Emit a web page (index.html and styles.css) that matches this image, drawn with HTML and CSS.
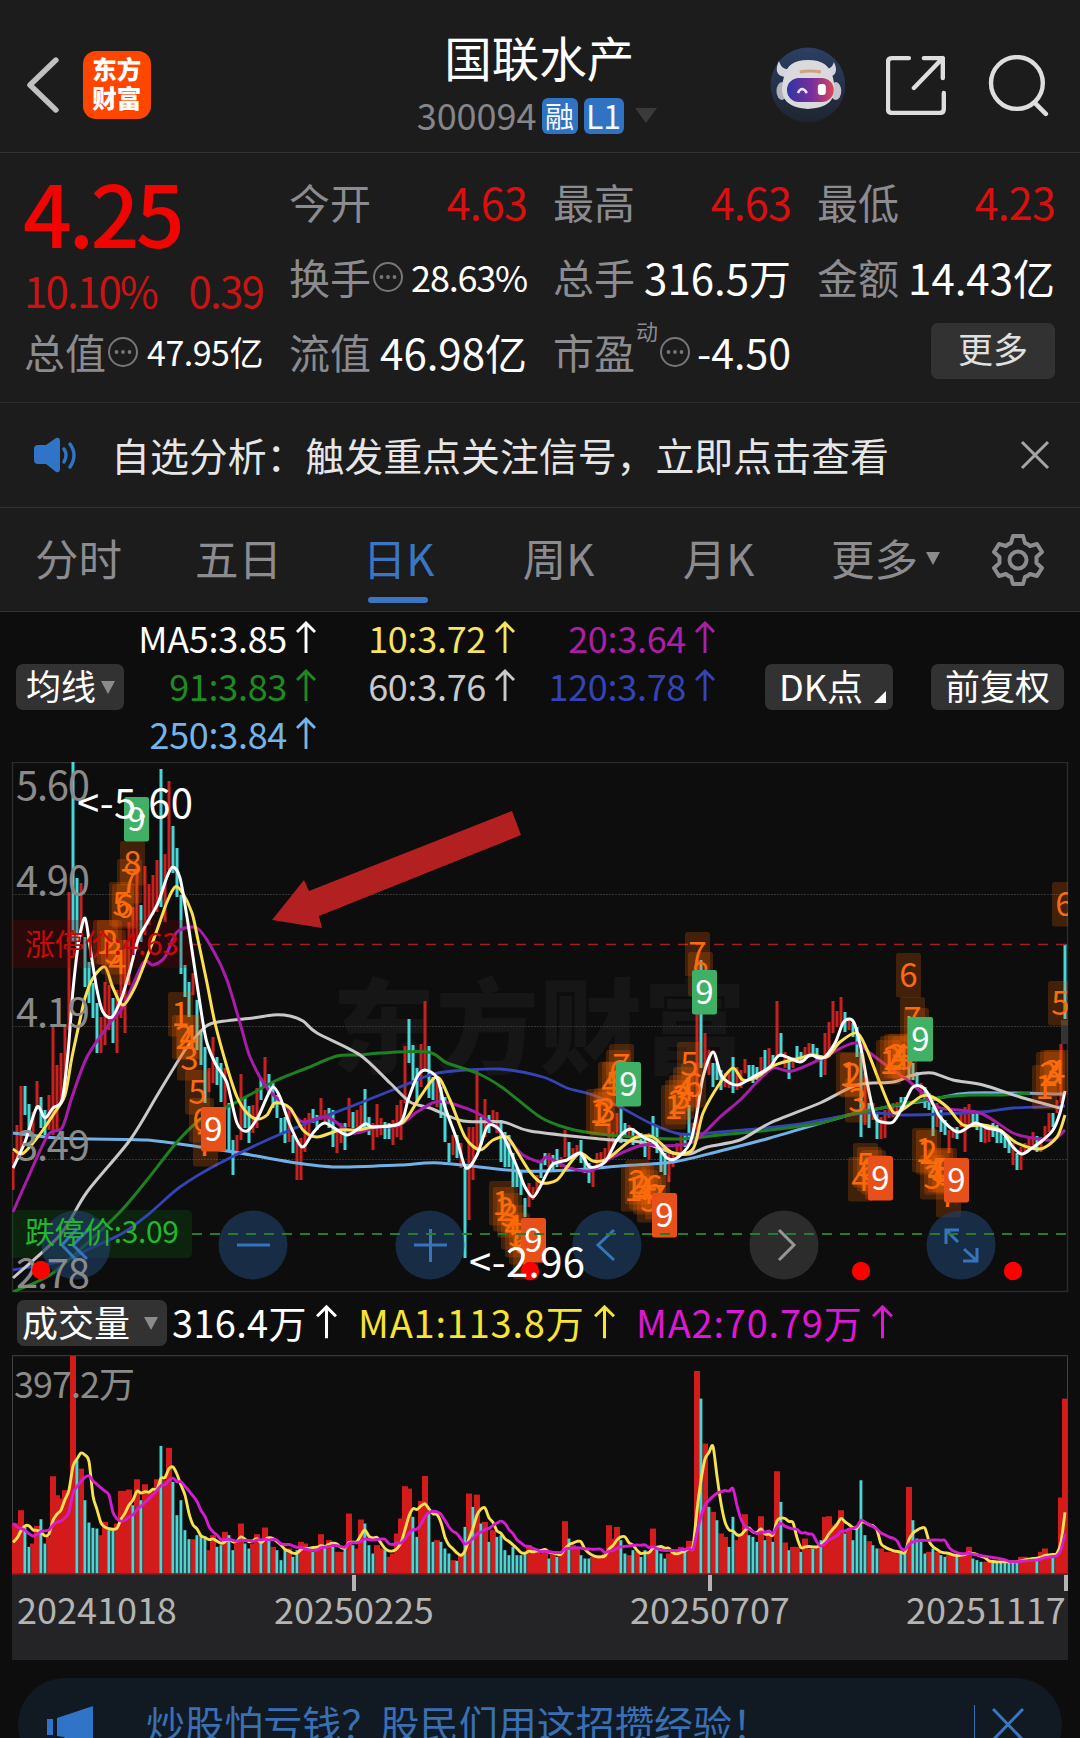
FILE: index.html
```html
<!DOCTYPE html>
<html lang="zh-CN">
<head>
    <meta charset="UTF-8">
    <meta name="viewport" content="width=device-width, initial-scale=1.0">
    <title>国联水产 300094</title>
    <link rel="stylesheet" href="styles.css">
</head>
<body>
    <svg class="defs" width="0" height="0">
        <symbol id="up" viewBox="0 0 20 32"><path d="M10 32V2M1 11L10 2L19 11" fill="none" stroke="currentColor" stroke-width="2.9"/></symbol>
        <symbol id="dots" viewBox="0 0 32 32"><circle cx="16" cy="16" r="14" fill="none" stroke="#77777a" stroke-width="2"/><circle cx="9.5" cy="16" r="1.9" fill="#77777a"/><circle cx="16" cy="16" r="1.9" fill="#77777a"/><circle cx="22.5" cy="16" r="1.9" fill="#77777a"/></symbol>
    </svg>

    <header class="header">
        <svg class="back" viewBox="0 0 34 58"><path d="M30 4L4 29L30 54" fill="none" stroke="#c0c0c0" stroke-width="5.5" stroke-linecap="round" stroke-linejoin="round"/></svg>
        <div class="logo"><span>东方</span><span>财富</span></div>
        <div class="title">
            <h1>国联水产</h1>
            <div class="code"><span>300094</span><i class="tag">融</i><i class="tag tag-wide">L1</i><b class="caret"></b></div>
        </div>
        <svg class="robot" viewBox="0 0 76 76">
            <defs>
                <linearGradient id="sky" x1="0" y1="0" x2="0" y2="1"><stop offset="0" stop-color="#2c3f63"/><stop offset="1" stop-color="#1f2430"/></linearGradient>
                <linearGradient id="visor"><stop offset="0" stop-color="#2f35a5"/><stop offset=".55" stop-color="#7b2f9c"/><stop offset="1" stop-color="#d8475c"/></linearGradient>
            </defs>
            <circle cx="38" cy="38" r="37.5" fill="url(#sky)"/>
            <path d="M9 14C5 22 6 29 15 30L20 22C14 23 11 20 9 14ZM64 15C68 22 67 30 58 30L54 22C59 23 63 20 64 15Z" fill="#d5d5dc"/>
            <ellipse cx="12" cy="44" rx="5.500" ry="9" fill="#b0b0bb"/>
            <ellipse cx="66" cy="44" rx="5.500" ry="9" fill="#c4c4cd"/>
            <path d="M38 13C53 13 60 19 63 30C68 50 62 61 38 62C16 61 8 50 14 30C17 18 24 13 38 13Z" fill="#d9d9de"/>
            <rect x="17" y="31" width="47" height="24" rx="12" fill="url(#visor)"/>
            <path d="M30 25Q40 23 51 25" stroke="#d0a376" stroke-width="3" fill="none"/>
            <path d="M28 46Q32 38 37 46" stroke="#e9e4ff" stroke-width="2.6" fill="none"/>
            <rect x="48" y="37" width="8" height="11" rx="3" fill="#fff"/>
        </svg>
        <svg class="share" viewBox="0 0 60 60"><path d="M23 3H6Q2 3 2 7V54Q2 58 6 58H54Q58 58 58 54V38M38 3H57V23M57 3L28 33" fill="none" stroke="#dedede" stroke-width="4.4" stroke-linecap="round" stroke-linejoin="round"/></svg>
        <svg class="search" viewBox="0 0 62 62"><circle cx="29" cy="28" r="26" fill="none" stroke="#dedede" stroke-width="4.4"/><path d="M47 48L58 59" stroke="#dedede" stroke-width="4.6" stroke-linecap="round"/></svg>
    </header>

    <section class="quote">
        <div class="now">
            <div class="price">4.25</div>
            <div class="change"><span>10.10%</span><span>0.39</span></div>
        </div>
        <div class="stat"><label>今开</label><em class="red">4.63</em></div>
        <div class="stat"><label>最高</label><em class="red">4.63</em></div>
        <div class="stat"><label>最低</label><em class="red">4.23</em></div>
        <div class="stat"><label>换手</label><svg class="info"><use href="#dots"/></svg><em class="mid">28.63%</em></div>
        <div class="stat"><label>总手</label><em>316.5万</em></div>
        <div class="stat"><label>金额</label><em>14.43亿</em></div>
        <div class="stat"><label>总值</label><svg class="info"><use href="#dots"/></svg><em class="small">47.95亿</em></div>
        <div class="stat"><label>流值</label><em>46.98亿</em></div>
        <div class="stat"><label>市盈<sup>动</sup></label><svg class="info"><use href="#dots"/></svg><em class="pe">-4.50</em></div>
        <div class="stat"><button class="more">更多</button></div>
    </section>

    <section class="notice">
        <svg class="speaker" viewBox="0 0 46 36"><path d="M5 8H13L23 1Q27 0 27 4V32Q27 36 23 35L13 27H5Q1 27 1 23V12Q1 8 5 8Z" fill="#2f74c6"/><path d="M31 12Q35 18 31 25M37 7Q45 18 37 30" fill="none" stroke="#2f74c6" stroke-width="3.4" stroke-linecap="round"/></svg>
        <p>自选分析：触发重点关注信号，立即点击查看</p>
        <svg class="close" viewBox="0 0 30 30"><path d="M2 2L28 28M28 2L2 28" stroke="#a5a5a5" stroke-width="3"/></svg>
    </section>

    <nav class="tabs">
        <a>分时</a><a>五日</a><a class="active">日K</a><a>周K</a><a>月K</a><a>更多<b class="caret"></b></a>
        <svg class="gear" viewBox="-27 -27 54 54"><path fill="none" stroke="#8b8b90" stroke-width="4" stroke-linejoin="round" d="M-5 -24H5L7 -17Q10 -16 12 -14L19 -16L24 -8L18.500 -3V3L24 8L19 16L12 14Q10 16 7 17L5 24H-5L-7 17Q-10 16 -12 14L-19 16L-24 8L-18.500 3V-3L-24 -8L-19 -16L-12 -14Q-10 -16 -7 -17Z"/><circle r="8.500" fill="none" stroke="#8b8b90" stroke-width="4"/></svg>
    </nav>

    <main>
        <div class="legend">
            <button class="chip chip-ma">均线<b class="caret"></b></button>
            <div class="ma-grid">
                <span class="c-white">MA5:3.85<svg><use href="#up"/></svg></span>
                <span class="c-yellow">10:3.72<svg><use href="#up"/></svg></span>
                <span class="c-purple">20:3.64<svg><use href="#up"/></svg></span>
                <span class="c-green">91:3.83<svg><use href="#up"/></svg></span>
                <span class="c-gray">60:3.76<svg><use href="#up"/></svg></span>
                <span class="c-blue">120:3.78<svg><use href="#up"/></svg></span>
                <span class="c-sky">250:3.84<svg><use href="#up"/></svg></span>
            </div>
            <button class="chip chip-dk">DK点<b class="corner"></b></button>
            <button class="chip chip-fq">前复权</button>
        </div>

        <svg id="kline" class="kline" viewBox="0 762 1080 532"></svg>

        <div class="vol-legend">
            <button class="chip chip-vol">成交量<b class="caret"></b></button>
            <span class="v1">316.4万<svg><use href="#up"/></svg></span>
            <span class="v2">MA1:113.8万<svg><use href="#up"/></svg></span>
            <span class="v3">MA2:70.79万<svg><use href="#up"/></svg></span>
        </div>

        <svg id="volume" class="volume" viewBox="0 1355 1080 220"></svg>

        <div class="dates">
            <span>20241018</span><span>20250225</span><span>20250707</span><span>20251117</span>
            <i class="tick t1"></i><i class="tick t2"></i><i class="tick t3"></i>
        </div>
    </main>

    <footer class="promo">
        <svg class="horn" viewBox="0 0 48 40"><path d="M0 14H6V30H0ZM10 13L46 1V40H30L26 36H19L17 32L10 31Z" fill="#2f74c6"/></svg>
        <p>炒股怕亏钱？股民们用这招攒经验！</p>
        <span class="bar"></span>
        <svg class="promo-close" viewBox="0 0 32 34"><path d="M1 2L31 33M31 2L1 33" stroke="#3a76bd" stroke-width="3"/></svg>
    </footer>

    <script src="app.js"></script>
</body>
</html>
```
FILE: styles.css
```css
* {
    box-sizing: border-box;
}
body {
    margin: 0;
    width: 1080px;
    height: 1738px;
    overflow: hidden;
    background: #0d0d0d;
    color: #fff;
    font-family: "Noto Sans CJK SC", "Noto Sans", sans-serif;
}
h1, p {
    margin: 0;
    font-weight: 400;
}
i, em {
    font-style: normal;
}
button {
    border: 0;
    padding: 0;
    font: inherit;
    color: #fff;
    background: #323232;
}
.defs {
    position: absolute;
}
.caret {
    display: inline-block;
    border: solid transparent;
    border-width: 13px 7px 0;
    border-top-color: #8b8b8b;
}

/* header */
.header {
    display: flex;
    align-items: center;
    height: 153px;
    padding: 17px 30px 0 26px;
    background: #1c1c1c;
    border-bottom: 1px solid #333;
}
.back {
    width: 34px;
    height: 58px;
}
.logo {
    display: flex;
    flex-direction: column;
    align-items: center;
    justify-content: center;
    width: 68px;
    height: 68px;
    margin-left: 23px;
    padding-bottom: 3px;
    border-radius: 13px;
    background: #ff4600;
    font-size: 24.5px;
    font-weight: 900;
    line-height: 29px;
}
.title {
    width: 300px;
    height: 118px;
    margin-left: 239px;
    text-align: center;
}
.title h1 {
    font-size: 47.5px;
    line-height: 56px;
    margin-top: 3px;
}
.code {
    display: flex;
    align-items: center;
    margin: 13px 0 0 27px;
    font-size: 36px;
    line-height: 36px;
    color: #85858a;
}
.code span {
    margin-top: -3px;
}
.tag {
    width: 36px;
    height: 36px;
    margin-left: 5px;
    border-radius: 6px;
    background: #3073c2;
    color: #f2faff;
    font-size: 29px;
    line-height: 34px;
}
.tag-wide {
    width: 40px;
    margin-left: 6px;
    font-size: 32px;
}
.code .caret {
    margin-left: 11px;
    border-width: 15px 11px 0;
    border-top-color: #3a3a3a;
}
.robot {
    width: 76px;
    height: 76px;
    margin-left: 81px;
}
.share {
    width: 60px;
    height: 60px;
    margin-left: 41px;
}
.search {
    width: 62px;
    height: 62px;
    margin: 2px 0 0 42px;
}

/* quote */
.quote {
    display: grid;
    grid-template-columns: 239px 238px 238px 238px;
    grid-template-rows: 75px 75px 75px;
    column-gap: 26px;
    height: 250px;
    padding: 11px 0 0 24px;
    background: #1c1c1c;
    border-bottom: 1px solid #2a2a2a;
}
.now {
    grid-row: span 2;
    color: #f00500;
}
.price {
    font-size: 86px;
    font-weight: 500;
    line-height: 94px;
    height: 101px;
    letter-spacing: -3.6px;
    margin-left: -1px;
}
.change {
    display: flex;
    justify-content: space-between;
    font-size: 42px;
    line-height: 50px;
    letter-spacing: -1.8px;
    color: #c81414;
}
.stat {
    display: flex;
    align-items: center;
    white-space: nowrap;
    line-height: 75px;
}
.stat label {
    position: relative;
    font-size: 41px;
    color: #8b8b90;
}
.stat em {
    margin-left: auto;
    font-size: 42px;
}
.stat .red {
    color: #d81010;
    font-size: 43px;
    letter-spacing: -0.8px;
}
.stat .mid {
    font-size: 36px;
    letter-spacing: -1.2px;
}
.stat .small {
    font-size: 34px;
    letter-spacing: -0.5px;
}
.stat .pe {
    font-size: 41px;
    letter-spacing: 0;
}
.stat sup {
    position: absolute;
    left: 83px;
    top: -21px;
    font-size: 22px;
}
.info {
    width: 32px;
    height: 32px;
    margin-left: 1px;
}
label:has(sup) + .info {
    margin-left: 24px;
}
.more {
    width: 124px;
    height: 56px;
    margin: -1px 0 0 auto;
    border-radius: 7px;
    font-size: 35px;
    line-height: 48px;
    padding-bottom: 6px;
    color: #e0e0e0;
}

/* notice */
.notice {
    display: flex;
    align-items: center;
    height: 105px;
    padding: 0 30px 0 33px;
    background: #1c1c1c;
    border-bottom: 1px solid #333;
}
.speaker {
    width: 46px;
    height: 36px;
}
.notice p {
    margin-left: 32px;
    padding-bottom: 2px;
    font-size: 38.9px;
    color: #e6e6e6;
}
.close {
    width: 30px;
    height: 30px;
    margin-left: auto;
}

/* tabs */
.tabs {
    display: flex;
    align-items: center;
    height: 104px;
    background: #1c1c1c;
    border-bottom: 1px solid #333;
    color: #8b8b90;
}
.tabs a {
    display: flex;
    align-items: center;
    justify-content: center;
    position: relative;
    width: 160px;
    height: 103px;
    padding: 0 3px 4px 0;
    font-size: 43.5px;
}
.tabs a:last-of-type {
    width: 174px;
}
.tabs .caret {
    margin: 2px 0 0 8px;
}
.tabs .active {
    color: #3a76c4;
}
.tabs .active::after {
    content: "";
    position: absolute;
    left: 48px;
    bottom: 8px;
    width: 60px;
    height: 6px;
    border-radius: 3px;
    background: #3a76c4;
}
.gear {
    width: 54px;
    height: 54px;
    margin-left: 17px;
}

/* moving average legend */
.chip {
    display: flex;
    align-items: center;
    height: 46px;
    border-radius: 7px;
    padding-bottom: 4px;
    font-size: 35px;
    position: relative;
    line-height: 42px;
}
.legend {
    display: flex;
    align-items: center;
    height: 150px;
    padding-left: 16px;
}
.chip-ma {
    width: 108px;
    padding-left: 10px;
}
.chip-ma .caret {
    margin: 4px 0 0 5px;
}
.ma-grid {
    display: grid;
    grid-template-columns: 192px 199px 200px;
    width: 592px;
    margin-top: -5px;
    line-height: 48px;
    font-size: 36px;
    letter-spacing: -0.3px;
}
.ma-grid span {
    display: flex;
    align-items: center;
    justify-content: flex-end;
}
.ma-grid svg {
    width: 20px;
    height: 32px;
    margin-left: 9px;
}
.c-white { color: #fff; }
.c-yellow { color: #f7e463; }
.c-purple { color: #aa1fa4; }
.c-green { color: #1f8a22; }
.c-gray { color: #c9c9c9; }
.c-blue { color: #3543b4; }
.c-sky { color: #74b4e8; }
.chip-dk {
    width: 128px;
    margin-left: 49px;
    padding-left: 14px;
    font-size: 36px;
}
.corner {
    position: absolute;
    right: 7px;
    bottom: 7px;
    border: solid transparent;
    border-width: 0 0 12px 12px;
    border-bottom-color: #fff;
}
.chip-fq {
    width: 133px;
    margin-left: 38px;
    justify-content: center;
}

/* charts */
.kline {
    display: block;
    width: 1080px;
    height: 532px;
}
.volume {
    display: block;
    width: 1080px;
    height: 220px;
}
.vol-legend {
    display: flex;
    align-items: center;
    height: 61px;
    padding: 0 0 3px 17px;
    font-size: 38px;
    white-space: nowrap;
}
.chip-vol {
    width: 150px;
    padding-left: 5px;
    font-size: 36px;
}
.chip-vol .caret {
    margin: 4px 0 0 14px;
}
.vol-legend span {
    display: flex;
    align-items: center;
    padding-bottom: 4px;
    letter-spacing: 0.3px;
}
.vol-legend svg {
    width: 21px;
    height: 35px;
    margin-left: 9px;
}
.v1 { width: 186px; margin-left: 5px; }
.vol-legend .v2 { width: 278px; color: #f7e434; letter-spacing: 0.8px; }
.vol-legend .v3 { color: #dc18d4; letter-spacing: 0.8px; }
.dates {
    display: flex;
    position: relative;
    width: 1056px;
    height: 85px;
    margin-left: 12px;
    background: #242426;
    color: #b4b4b4;
    font-size: 36px;
    line-height: 67px;
}
.dates span {
    width: 160px;
}
.dates span:nth-child(1) { margin-left: 5px; }
.dates span:nth-child(2) { margin-left: 97px; }
.dates span:nth-child(3) { margin-left: 196px; }
.dates span:nth-child(4) { margin-left: 116px; }
.tick {
    position: absolute;
    top: 0;
    width: 4px;
    height: 16px;
    background: #b4b4b4;
}
.t1 { left: 340px; }
.t2 { left: 696px; }
.t3 { left: 1052px; }

/* promo */
.promo {
    display: flex;
    align-items: center;
    width: 1044px;
    height: 94px;
    margin: 18px 0 0 18px;
    padding-left: 29px;
    border-radius: 47px;
    background: #111922;
    color: #3a70b2;
}
.horn {
    width: 48px;
    height: 40px;
}
.promo p {
    width: 828px;
    margin-left: 51px;
    padding-bottom: 7px;
    font-size: 39.1px;
    white-space: nowrap;
}
.bar {
    width: 1px;
    height: 40px;
    background: #3a70b2;
}
.promo-close {
    width: 32px;
    height: 34px;
    margin: -2px 0 0 17px;
}
svg text {
    font-family: "Noto Sans CJK SC", "Noto Sans", sans-serif;
}
```
FILE: app.js
```js
const RED = "#c9211f", CYAN = "#48d6d6";

// one entry per trading day: colour, high and low (y)
const candles = `R1152-1190 R1125-1160 R1086-1153 C1086-1115 C1104-1135 R1112-1140 R1081-1110 C1097-1128 C1110-1135 R1095-1130
R1025-1135 R1065-1130 R1053-1103 R1025-1085 R892-1030 C762-942 C878-947 R883-937 C937-987 C962-1003
C983-1018 C1003-1053 R1017-1053 R982-1045 R985-1030 C998-1043 R990-1053 R957-1018 R940-1033 R922-985
R907-960 R863-950 C905-942 R866-935 R884-925 R875-915 R860-912 C769-907 R854-922 R781-870
C826-873 C848-897 C895-974 C965-997 C982-1017 R973-995 C1000-1050 C1030-1065 C1047-1103 R1068-1092
R1037-1083 C1057-1085 C1063-1102 R1068-1110 C1103-1150 C1140-1175 R1135-1152 R1074-1140 C1098-1128 C1106-1143
R1105-1133 R1088-1128 C1078-1100 R1057-1085 C1074-1093 C1083-1108 C1095-1118 C1118-1135 C1117-1143 R1107-1142
C1135-1153 R1140-1180 R1138-1180 R1118-1152 R1113-1137 C1109-1123 C1115-1130 R1098-1120 R1110-1123 C1108-1128
C1110-1147 R1128-1153 R1123-1143 C1123-1150 R1098-1127 C1112-1128 R1110-1130 R1105-1130 C1089-1128 C1117-1135
R1123-1150 R1104-1137 R1118-1135 C1122-1139 C1123-1139 R1120-1145 R1105-1137 R1100-1140 R1046-1103 C1019-1063
C1045-1085 C1068-1103 R1044-1087 R1001-1072 C1046-1098 C1077-1100 R1080-1107 C1087-1118 C1097-1142 C1143-1162
R1135-1155 C1135-1158 R1143-1168 C1168-1258 R1127-1220 R1127-1180 R1068-1148 C1117-1145 R1099-1137 C1115-1133
R1110-1125 R1112-1133 C1120-1162 C1132-1167 C1135-1167 C1153-1187 C1167-1187 C1170-1195 C1198-1217 R1183-1207
R1187-1200 R1175-1193 C1162-1178 C1153-1165 R1153-1167 C1155-1170 C1149-1167 R1157-1167 R1130-1157 C1142-1160
R1148-1160 R1145-1155 C1140-1163 C1157-1173 C1163-1183 R1167-1187 R1153-1168 R1152-1167 R1148-1163 R1125-1158
R1132-1148 R1113-1137 C1103-1143 C1123-1137 R1125-1135 C1128-1145 R1133-1143 C1133-1147 C1137-1157 R1133-1160
C1116-1145 C1127-1153 C1147-1172 C1153-1175 R1153-1182 R1153-1167 R1143-1157 R1135-1152 C1133-1147 C1105-1140
R1123-1137 R960-1137 C960-1068 R1033-1070 R1050-1075 C1063-1087 C1063-1080 C1070-1090 R1073-1087 R1070-1088
C1057-1093 R1067-1090 R1070-1088 R1059-1073 C1065-1080 C1065-1083 C1067-1080 R1057-1073 C1050-1070 R1048-1070
C1055-1067 R1001-1058 C1033-1057 R1052-1068 C1057-1079 R1057-1068 C1046-1063 C1052-1062 R1047-1057 R1043-1058
C1044-1055 C1048-1060 C1055-1077 R1033-1075 R1022-1057 R1001-1033 R1011-1027 R997-1025 C1012-1032 R1020-1030
C1023-1037 C1027-1057 C1050-1137 R1073-1125 C1103-1128 R1103-1120 C1113-1139 R1117-1139 R1110-1138 R1107-1118
R1103-1117 R1102-1112 C1097-1112 C1097-1107 C1016-1080 C1063-1080 C1072-1087 R1083-1097 C1087-1108 C1093-1110
C1107-1136 R1103-1127 C1110-1132 C1120-1135 R1130-1153 R1127-1138 C1127-1139 R1112-1127 R1107-1152 R1104-1125
C1110-1123 C1112-1130 C1123-1142 R1128-1143 R1127-1142 C1123-1137 C1125-1143 C1130-1143 C1137-1148 C1140-1153
R1143-1165 C1153-1170 R1147-1170 R1143-1153 R1137-1150 R1132-1145 C1136-1152 R1137-1152 R1126-1140 R1113-1132
C1113-1127 R1100-1113 R1044-1103 C944-1019`.split(/\s+/);

// volume per day, full height = 653
const volumes = `R150 R150 R190 C145 C80 R90 R143 C163 C90 R110 R292 R235 R225 R250 R250 R653 C340 R315 C220 C153
C137 C135 R115 R155 C130 C130 R150 R248 R248 R252 C205 R283 C220 R268 R245 R250 R283 C383 R280 R377
C275 C175 C220 C130 C103 R103 C115 C115 C105 R70 R115 C80 C85 R125 C115 C70 R90 R150 C90 C75
R90 R118 C90 R138 C100 R80 C70 C40 C70 R75 C50 C70 R95 R90 R70 C65 R75 R118 C80 R100
C80 R65 R65 C75 R180 C85 R75 R162 C150 C85 C60 R85 R75 C70 R50 R60 R120 R165 R262 R255
C170 C110 R218 R293 C180 C95 R100 C95 C75 C60 R40 C38 R60 C140 R240 C200 R237 C150 R155 C95
R130 C110 C115 C70 C55 C80 C55 C55 C60 R85 R70 R70 R60 R75 C45 R60 C50 R60 R157 C105
R85 R75 C55 C45 C45 R50 R55 R55 R60 R145 R105 R140 C100 C60 R55 C70 R65 C50 C70 R60
R135 C80 C60 C45 R60 R65 R65 R80 C70 R98 R95 R608 C525 R390 C200 R185 C160 R120 R110 C80
C170 R100 R120 R178 C115 C110 C95 R172 C100 R115 C95 R307 C215 R93 C70 R80 R80 C65 R105 R75
C75 R80 C100 R170 R172 R145 R150 R190 C120 R130 C100 C140 C280 C115 R97 C85 C75 R75 R65 R65
R65 R60 C65 C60 R260 C160 C105 C95 C60 R65 C75 R65 C55 C50 R55 R55 C55 R60 R60 R80
C45 C40 C35 R35 R35 C35 C35 C35 C35 C35 C35 C35 R50 R50 R45 R45 C40 R65 R75 R55
C50 R60 R228 R525`.split(/\s+/);

const averages = [
    ["#72b1e8", 3, "13,1133 57,1138 90,1139 147,1140 200,1147 240,1153 290,1162 337,1167 400,1165 440,1163 520,1171 570,1170 620,1166 673,1162 720,1151 770,1138 857,1113 930,1100 970,1093 1065,1094"],
    ["#3543b4", 2.8, "13,1270 67,1260 87,1250 123,1233 150,1213 180,1187 220,1163 283,1133 360,1103 400,1087 430,1075 453,1071 500,1069 543,1077 567,1088 593,1095 620,1107 650,1123 680,1134 720,1132 793,1125 863,1113 907,1115 980,1112 1013,1108 1065,1106"],
    ["#1f8022", 3, "13,1292 50,1275 83,1247 120,1212 147,1180 177,1142 200,1120 227,1107 253,1093 277,1080 307,1068 337,1056 360,1055 380,1053 428,1052 447,1063 477,1073 503,1088 540,1117 567,1128 600,1134 673,1139 720,1135 770,1130 820,1123 857,1113 937,1098 970,1095 1000,1095 1030,1093"],
    ["#c8c8c8", 3, "13,1278 60,1235 87,1192 130,1140 158,1094 185,1050 200,1032 213,1023 253,1018 273,1015 290,1016 303,1021 317,1033 360,1055 390,1083 410,1102 430,1108 463,1121 503,1122 530,1131 600,1139 640,1142 673,1153 690,1154 707,1147 740,1140 770,1123 820,1103 857,1085 893,1082 913,1075 932,1073 953,1080 983,1085 1020,1097 1060,1108"],
    ["#a81da8", 3, "13,1212 27,1180 48,1135 62,1128 72,1097 87,1057 110,1023 123,1007 143,963 153,965 165,957 177,932 197,928 213,950 227,980 242,1030 250,1057 267,1088 290,1110 303,1122 327,1117 353,1133 377,1127 398,1126 417,1112 435,1102 450,1103 477,1113 493,1125 510,1142 523,1155 540,1162 547,1157 567,1167 590,1171 613,1157 643,1145 663,1146 693,1142 720,1117 740,1100 757,1082 773,1068 792,1071 823,1058 843,1047 857,1043 870,1053 890,1068 910,1082 927,1098 940,1108 980,1113 1013,1133 1033,1138 1053,1140 1065,1130"],
    ["#fae052", 3, "13,1149 22,1154 33,1143 43,1130 55,1112 65,1095 72,1057 80,1020 85,998 93,978 105,967 113,988 123,1005 135,987 147,957 157,930 167,902 175,887 182,892 192,913 198,940 207,983 215,1023 227,1067 237,1097 247,1113 257,1119 267,1115 275,1103 290,1108 303,1130 317,1137 340,1130 358,1130 373,1127 402,1123 420,1097 437,1077 450,1100 465,1137 480,1150 493,1140 507,1137 518,1153 530,1172 542,1183 557,1180 567,1167 580,1153 593,1161 607,1159 627,1143 637,1137 653,1137 673,1153 693,1149 703,1113 720,1083 733,1068 743,1080 757,1077 775,1065 800,1058 813,1055 827,1057 840,1042 857,1033 867,1050 880,1083 893,1112 905,1108 920,1097 930,1096 947,1107 963,1125 983,1125 1000,1130 1017,1143 1040,1149 1057,1137 1065,1115"],
    ["#fff", 3, "13,1168 25,1142 37,1107 45,1118 53,1108 62,1100 68,1053 73,990 79,940 85,918 90,947 97,990 103,1012 112,1017 122,997 130,970 138,940 147,923 158,903 167,877 173,867 180,878 187,917 193,957 202,1017 207,1043 215,1063 227,1083 237,1123 247,1131 258,1117 267,1097 273,1087 280,1097 290,1125 302,1147 313,1133 325,1123 347,1135 365,1124 373,1127 400,1123 408,1100 417,1077 425,1070 437,1078 445,1107 457,1140 466,1168 477,1155 487,1127 495,1126 503,1135 517,1167 525,1187 533,1197 540,1187 552,1165 567,1160 580,1153 590,1167 605,1162 617,1140 630,1129 643,1137 655,1143 667,1158 677,1158 690,1143 697,1113 703,1077 713,1052 721,1075 728,1082 738,1085 753,1077 770,1067 780,1055 800,1062 810,1055 823,1058 835,1043 843,1023 850,1019 855,1025 862,1053 868,1087 875,1117 882,1122 893,1122 902,1108 912,1088 920,1086 927,1092 940,1117 958,1132 975,1123 987,1128 1002,1132 1013,1147 1022,1154 1032,1148 1043,1140 1053,1130 1060,1113 1065,1091"]
];

// sequence marks: x, y, digit (9 closes a sequence, g = sell side, o = buy side)
const marks = [
    [93,920,1],[97,920,2],[101,930,3],[105,940,4],[109,882,5],[112,884,6],[117,859,7],[120,841,8],[124,797,9,"g"],
    [168,992,1],[172,1015,2],[176,1015,4],[177,1036,3],[185,1070,5],[189,1098,6],[193,1122,7],[201,1107,9,"o"],
    [489,1181,1],[493,1187,2],[497,1193,3],[501,1205,4],[505,1213,5],[509,1220,6],[513,1235,7],[521,1218,9,"o"],
    [586,1089,1],[590,1092,2],[594,1088,3],[598,1062,4],[602,1062,5],[606,1050,6],[609,1044,7],[616,1062,9,"g"],
    [621,1167,1],[625,1160,2],[629,1165,3],[633,1170,4],[637,1178,5],[641,1165,6],[645,1175,7],[652,1193,9,"o"],
    [661,1085,1],[665,1080,2],[669,1075,3],[673,1067,4],[681,1063,6],[677,1042,5],[685,932,7],[688,952,8],[692,970,9,"g"],
    [836,1052,1],[840,1053,2],[845,1078,3],[848,1157,4],[853,1143,5],[857,1147,6],[861,1150,7],[865,1155,8],[868,1156,9,"o"],
    [876,1040,1],[880,1036,2],[884,1034,3],[888,1034,4],[892,1036,5],[896,953,6],[900,997,7],[904,1008,8],[908,1017,9,"g"],
    [912,1128,1],[916,1130,2],[920,1155,3],[924,1150,4],[928,1148,5],[932,1148,6],[936,1173,7],[944,1158,9,"o"],
    [1032,1065,1],[1036,1052,2],[1040,1050,3],[1044,1050,4],[1048,981,5],[1052,882,6]
];

const dayX = (i) => 13 + i * 4;

// smooth curve through a list of points
function curve(pts) {
    let d = `M${pts[0]}`;
    for (let i = 0; i < pts.length - 1; i++) {
        const a = pts[i - 1] || pts[i], b = pts[i], c = pts[i + 1], e = pts[i + 2] || c;
        d += `C${b[0] + (c[0] - a[0]) / 7},${b[1] + (c[1] - a[1]) / 7} ${c[0] - (e[0] - b[0]) / 7},${c[1] - (e[1] - b[1]) / 7} ${c}`;
    }
    return d;
}

function label(x, y, text, size, fill, width) {
    return `<text x="${x}" y="${y}" font-size="${size}" fill="${fill}" textLength="${width}" lengthAdjust="spacing">${text}</text>`;
}

function drawKline() {
    let s = `<defs><clipPath id="clip"><rect x="12" y="762" width="1056" height="530"/></clipPath></defs>`;
    s += `<text x="332" y="1066" font-size="103" font-weight="900" fill="#161616" textLength="414">东方财富</text>`;
    s += `<rect x="12.500" y="762.500" width="1055" height="529" fill="none" stroke="#2a2a2a" stroke-width="1.500"/>`;
    [894.5, 1026.5, 1159.5].forEach((y) => {
        s += `<path d="M12 ${y}H1068" stroke="#343434" stroke-width="1" stroke-dasharray="2 1"/>`;
    });
    s += `<g clip-path="url(#clip)">`;
    candles.forEach((c, i) => {
        const [hi, lo] = c.slice(1).split("-").map(Number);
        s += `<rect x="${dayX(i) - 1.5}" y="${hi}" width="3" height="${lo - hi}" fill="${c[0] === "R" ? RED : CYAN}"/>`;
    });
    s += `<rect x="1061" y="1020" width="7" height="24" fill="#343434"/>`;
    s += `<rect x="6" y="920" width="186" height="48" rx="5" fill="#7a0505" fill-opacity=".25"/>`;
    s += `<rect x="6" y="1210" width="186" height="48" rx="5" fill="#0a6a14" fill-opacity=".25"/>`;
    s += `<path d="M192 944.500H1068" stroke="#a02020" stroke-width="1.600" stroke-dasharray="10 8"/>`;
    averages.forEach(([color, w, pts]) => {
        s += `<path d="${curve(pts.split(" ").map((p) => p.split(",").map(Number)))}" fill="none" stroke="${color}" stroke-width="${w}" stroke-linejoin="round"/>`;
    });
    marks.forEach(([x, y, n, kind]) => {
        const fill = kind === "g" ? "#3fb065" : kind === "o" ? "#e8501a" : "rgba(255,106,0,.22)";
        s += `<rect x="${x}" y="${y}" width="25" height="44.500" rx="2.500" fill="${fill}"/>`;
        s += `<text x="${x + 12.5}" y="${y + 34}" text-anchor="middle" font-size="33" fill="${kind ? "#fff" : "#f96c10"}">${n}</text>`;
    });
    s += label(25, 955, "涨停价:4.63", 30, "#c80a0a", 154);
    s += `</g>`;

    // round controls
    [76, 253, 430, 607, 784, 961].forEach((x) => {
        s += `<circle cx="${x}" cy="1245" r="34.500" fill="${x === 784 ? "#3c3c3c" : "#1f3c64"}" fill-opacity=".66"/>`;
    });
    s += `<g fill="none" stroke="#3674bd" stroke-width="3">
        <path d="M77 1229L62 1245L77 1261M89 1229L73 1245L87 1259"/>
        <path d="M237 1245H270"/><path d="M414 1245H447M430.500 1229V1262"/>
        <path d="M614 1230L598 1245L614 1260"/><path d="M779 1230L794 1245L779 1260" stroke="#969696"/>
        <path d="M959 1230H946V1244M946 1230L958 1242M977 1248V1261H963M976 1260L964 1249"/></g>`;
    s += `<path d="M192 1234H1068" stroke="#267b2c" stroke-width="1.800" stroke-dasharray="10 8"/>`;
    s += label(25, 1243, "跌停价:3.09", 30, "#25b52e", 154);
    [["5.60", 800], ["4.90", 895], ["4.19", 1027], ["3.49", 1160], ["2.78", 1288]].forEach(([t, y]) => {
        s += label(16, y, t, 40, "#8a8a8a", 74);
    });
    [[41, 1270], [530, 1271], [861, 1271], [1013, 1271]].forEach(([x, y]) => {
        s += `<circle cx="${x}" cy="${y}" r="9.200" fill="#f00"/>`;
    });
    s += label(77, 818, "&lt;-5.60", 40, "#fff", 116);
    s += label(469, 1277, "&lt;-2.96", 40, "#fff", 116);
    s += `<path d="M272 920L304 880L309 891L512 811L521 835L319 916L322 928Z" fill="#b32022"/>`;
    document.getElementById("kline").innerHTML = s;
}

function drawVolume() {
    const base = 1573.5, scale = 217.5 / 653;
    const vals = volumes.map((v) => Number(v.slice(1)));
    let s = `<path d="M12.500 1575V1355.700H1067.500V1575" fill="none" stroke="#444" stroke-width="1"/>`;
    ["R", "C"].forEach((kind) => {
        volumes.forEach((v, i) => {
            if (v[0] !== kind) return;
            const w = kind === "R" ? 6 : 3, h = vals[i] * scale;
            const x = Math.max(12, dayX(i) - w / 2);
            s += `<rect x="${x}" y="${base - h}" width="${Math.min(w, 1067.5 - x)}" height="${h}" fill="${kind === "R" ? "#d41b1b" : CYAN}"/>`;
            if (kind === "C") s += `<rect x="${x + w}" y="${base - h}" width=".7" height="${h}" fill="#333"/>`;
        });
    });
    s += `<path d="M12 1574H1068" stroke="#7d2b2b" stroke-width="1.500"/>`;
    s += label(14, 1398, "397.2万", 36, "#8a8a8a", 121);
    // 5 and 10 day averages, seeded with the days before the window
    const before = [260, 240, 200, 180, 160, 90, 80, 70, 80];
    [[5, "#f7e052"], [10, "#d61cd0"]].forEach(([n, color]) => {
        const all = before.concat(vals);
        const pts = vals.map((v, i) => {
            const part = all.slice(i + 10 - n, i + 10);
            return [dayX(i), base - part.reduce((a, b) => a + b, 0) / n * scale];
        });
        s += `<path d="${curve(pts)}" fill="none" stroke="${color}" stroke-width="2.900" stroke-linejoin="round"/>`;
    });
    document.getElementById("volume").innerHTML = s;
}

drawKline();
drawVolume();
```
